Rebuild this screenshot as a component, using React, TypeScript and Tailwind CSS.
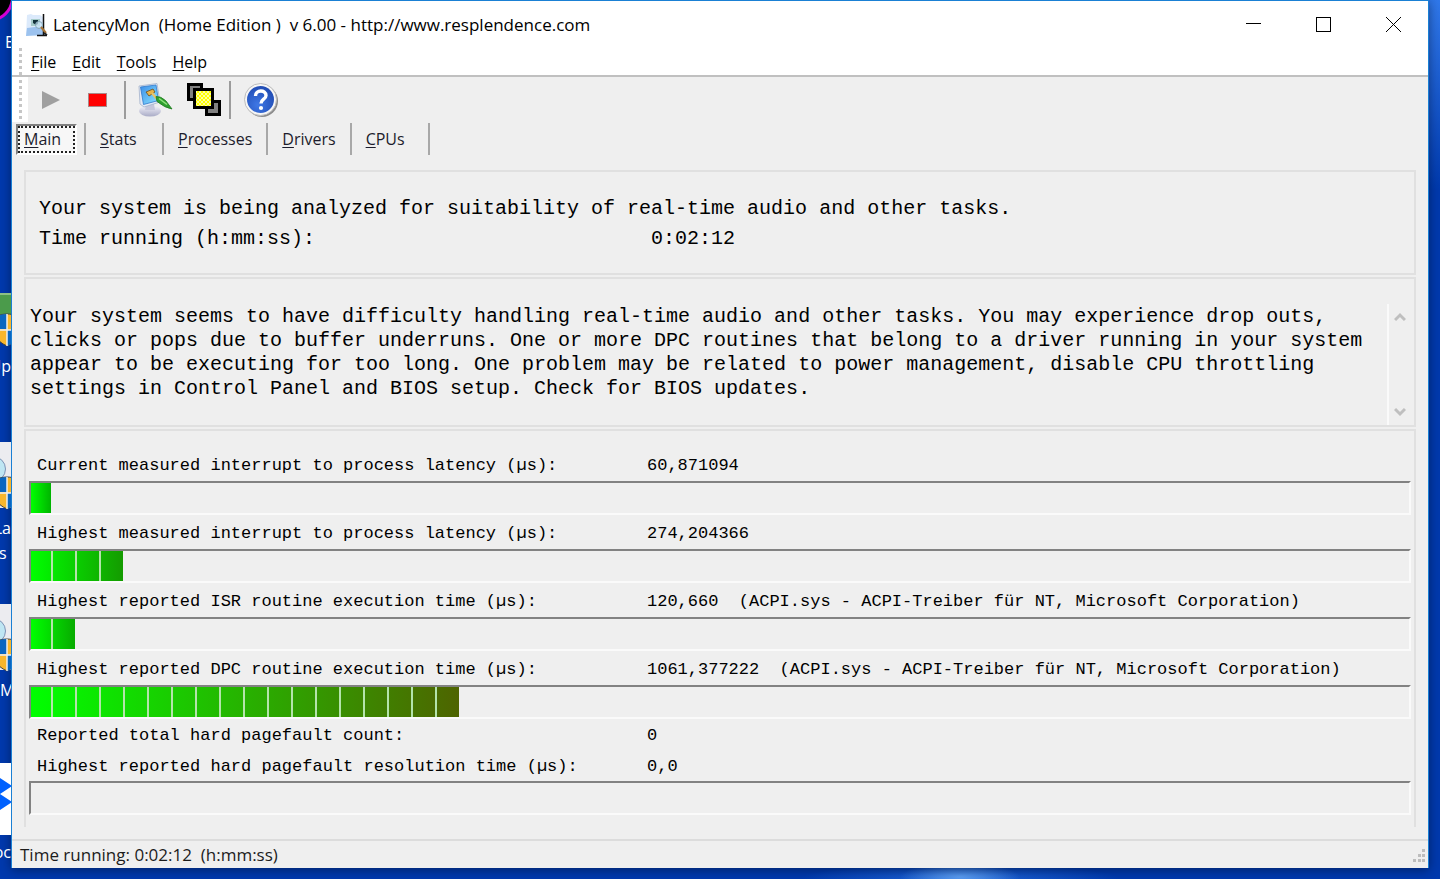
import React from "react";

const MONO = "font-['Liberation_Mono','Courier_New',monospace]";
const UI = "font-['Open_Sans','Noto_Sans',sans-serif]";

function Mnemonic({ text }: { text: string }) {
  return (
    <>
      <span className="underline underline-offset-2">{text[0]}</span>
      {text.slice(1)}
    </>
  );
}

function AppIcon() {
  return (
    <svg width="22" height="24" viewBox="0 0 22 24" aria-hidden="true">
      <path d="M1 2 L5 1 L7 2 L14 2 L17 4 L17 21 L3 22 L0 23 Z" fill="#dceafb" />
      <path d="M1 15 L17 13 L19 22 L0 23 Z" fill="#9cc2ee" />
      <path d="M17.500 1 V22 M11 22.500 H21" stroke="#111" strokeWidth="1.500" />
      <rect x="5" y="6" width="9" height="7" fill="#a5cbc8" />
      <path d="M7 7 h5 v4 l-2 1 l-3-2z" fill="#12313a" />
      <circle cx="13" cy="12" r="3.500" fill="#cfe8f8" fillOpacity=".7" stroke="#8ab" />
      <path d="M15 14 L20 20" stroke="#a87434" strokeWidth="2" />
      <path d="M18 20 L21 22" stroke="#222" strokeWidth="2" />
    </svg>
  );
}

function MonitorIcon() {
  return (
    <svg width="36" height="36" viewBox="0 0 36 36" aria-hidden="true">
      <defs>
        <linearGradient id="screen" x1="0" y1="0" x2="1" y2="1">
          <stop offset="0" stopColor="#3b8ee8" />
          <stop offset="1" stopColor="#8be4ff" />
        </linearGradient>
        <linearGradient id="base" x1="0" y1="0" x2="0" y2="1">
          <stop offset="0" stopColor="#f4f4fb" />
          <stop offset="1" stopColor="#a9abc6" />
        </linearGradient>
      </defs>
      <ellipse cx="13" cy="29" rx="11" ry="5.500" fill="url(#base)" />
      <path d="M9 22 h8 l1 6 h-10z" fill="#c5c7dc" />
      <path d="M2 4 L20 1.500 L23 20 L7 25 L3 22 Z" fill="#e3e9f5" stroke="#a3b3cc" strokeWidth=".8" />
      <path d="M3.500 5 L19 3 L21.500 18.500 L6.500 22.500 Z" fill="url(#screen)" stroke="#2f78cc" strokeWidth=".8" />
      <path d="M9 10 L16 7 L18 10 L12 14 Z" fill="#e8b44a" stroke="#6b4a18" strokeWidth=".8" />
      <path d="M15 11 L20 17" stroke="#e9c46b" strokeWidth="2.500" />
      <path d="M19 14.500 Q24 14 29 19 L35 27 Q28 26 20 19.500 Z" fill="#2fa02f" stroke="#1d7a1d" strokeWidth=".8" />
      <path d="M22 16.500 L30 22.500" stroke="#8fe37b" strokeWidth="1.500" />
    </svg>
  );
}

function LayersIcon() {
  return (
    <svg width="34" height="34" viewBox="0 0 34 34" aria-hidden="true">
      <defs>
        <pattern id="dither" width="4" height="4" patternUnits="userSpaceOnUse">
          <rect width="4" height="4" fill="#ffff00" />
          <rect width="2" height="2" fill="#ffff9c" />
          <rect x="2" y="2" width="2" height="2" fill="#ffff9c" />
        </pattern>
      </defs>
      <rect x="1.500" y="1.500" width="13" height="15" fill="#808080" stroke="#000" strokeWidth="3" />
      <rect x="19.500" y="18.500" width="13" height="13" fill="#808080" stroke="#000" strokeWidth="3" />
      <rect x="7.500" y="6.500" width="18" height="18" fill="url(#dither)" stroke="#000" strokeWidth="3" />
    </svg>
  );
}

function HelpIcon() {
  return (
    <svg width="36" height="36" viewBox="0 0 36 36" aria-hidden="true">
      <defs>
        <radialGradient id="ball" cx=".4" cy=".7" r=".8">
          <stop offset="0" stopColor="#3f78e6" />
          <stop offset="1" stopColor="#1c46ad" />
        </radialGradient>
      </defs>
      <circle cx="19" cy="19" r="16" fill="#8b8b8b" />
      <circle cx="17.500" cy="17.500" r="16" fill="#f6f6f6" stroke="#bdbdbd" />
      <circle cx="17.500" cy="17.500" r="13.500" fill="url(#ball)" />
      <path d="M12.500 14 C12.500 7.500 23 7.500 23 13.500 C23 17.500 18 17 18 21.500" fill="none" stroke="#fff" strokeWidth="3.400" />
      <circle cx="18" cy="26" r="2.100" fill="#fff" />
    </svg>
  );
}

function Gripper({ dots }: { dots: number }) {
  return (
    <div className="flex w-4 flex-col items-center justify-center gap-[3px] bg-white" aria-hidden="true">
      {Array.from({ length: dots }, (_, i) => (
        <span key={i} className="size-[3px] bg-[#c6c6c6]" />
      ))}
    </div>
  );
}

function Separator() {
  return <span className="h-[38px] w-[2px] shrink-0 bg-[#9c9c9c]" aria-hidden="true" />;
}

const tabs = ["Stats", "Processes", "Drivers", "CPUs"];

interface MeterProps {
  label: string;
  segments: number;
  end?: string;
}

function Meter({ label, segments, end = "#00ff00" }: MeterProps) {
  return (
    <div
      role="progressbar"
      aria-label={label}
      aria-valuemin={0}
      aria-valuemax={57}
      aria-valuenow={segments}
      className="flex h-[34px] border-2 border-t-[#828282] border-r-[#fafafa] border-b-[#fafafa] border-l-[#828282]"
    >
      <div className="flex h-[30px]" style={{ backgroundImage: `linear-gradient(to right, #00ff00, ${end})` }}>
        {Array.from({ length: segments }, (_, i) => (
          <span
            key={i}
            className={
              (i === 0 ? "w-[20px]" : "w-[22px]") +
              " box-content " +
              (i < segments - 1 ? "border-r-2 border-[#b4e4aa]" : "")
            }
          />
        ))}
      </div>
    </div>
  );
}

const readings = [
  { label: "Current measured interrupt to process latency (µs):", value: "60,871094", segments: 1, end: "#00b400" },
  { label: "Highest measured interrupt to process latency (µs):", value: "274,204366", segments: 4, end: "#149b00" },
  {
    label: "Highest reported ISR routine execution time (µs):",
    value: "120,660  (ACPI.sys - ACPI-Treiber für NT, Microsoft Corporation)",
    segments: 2,
    end: "#08ab00",
  },
  {
    label: "Highest reported DPC routine execution time (µs):",
    value: "1061,377222  (ACPI.sys - ACPI-Treiber für NT, Microsoft Corporation)",
    segments: 18,
    end: "#4e6400",
  },
];

function Reading({ label, value, tall }: { label: string; value: string; tall?: boolean }) {
  return (
    <div
      className={"grid grid-cols-[610px_1fr] items-center pt-[3px] pl-2 whitespace-pre " + (tall ? "h-[34px]" : "h-[31px]")}
    >
      <span>{label}</span>
      <span>{value}</span>
    </div>
  );
}

function Shield() {
  return (
    <svg width="34" height="34" viewBox="0 0 34 34" aria-hidden="true">
      <path d="M17 1 C24 1 30 4 33 5 C33 20 28 28 17 33 C6 28 1 20 1 5 C4 4 10 1 17 1Z" fill="#f8b62d" stroke="#444" />
      <path d="M17 1 C10 1 4 4 1 5 C1 10 1 13 2 16 H17Z" fill="#0a66c0" />
      <path d="M17 17 H32 C30 25 25 30 17 33Z" fill="#0a66c0" />
      <path d="M17 1 V33 M1 17 H33" stroke="#eee" strokeWidth="1.500" />
    </svg>
  );
}

function DesktopStrip() {
  return (
    <div className={"relative w-[11px] shrink-0 overflow-hidden text-[16px] leading-5 text-white " + UI}>
      <div className="absolute top-[-28px] left-[-36px] size-[50px] rounded-full border-3 border-[#d400d4] bg-black" />
      <span className="absolute top-8 left-[5px]">B</span>
      <div className="absolute top-[293px] left-0 h-7 w-3 border-t-2 border-[#8cc084] bg-[#4b9b4b]" />
      <div className="absolute top-[313px] left-[-10px]"><Shield /></div>
      <span className="absolute top-[356px] right-0">Up</span>
      <div className="absolute top-[442px] left-0 h-[66px] w-3 bg-[#ececf0]" />
      <div className="absolute top-[456px] left-[-20px] size-[26px] rounded-full border border-[#7e92b5] bg-[#bfe6f3]" />
      <div className="absolute top-[476px] left-[-10px]"><Shield /></div>
      <span className="absolute top-[518px] right-0">La</span>
      <span className="absolute top-[543px] left-[-1px]">s</span>
      <div className="absolute top-[604px] left-0 h-[66px] w-3 bg-[#ececf0]" />
      <div className="absolute top-[618px] left-[-20px] size-[26px] rounded-full border border-[#7e92b5] bg-[#bfe6f3]" />
      <div className="absolute top-[638px] left-[-10px]"><Shield /></div>
      <span className="absolute top-[680px] left-0">M</span>
      <div className="absolute top-[763px] left-0 h-[72px] w-3 bg-white">
        <svg width="12" height="72" viewBox="0 0 12 72" aria-hidden="true">
          <path d="M0 15 L12 23 L0 31Z M0 31 L12 39 L0 47Z" fill="#0061fe" />
        </svg>
      </div>
      <span className="absolute top-[842px] right-0">oc</span>
    </div>
  );
}

export default function App() {
  return (
    <div className="flex min-h-screen bg-[radial-gradient(ellipse_60px_14px_at_960px_877px,#5a9cf0,transparent),radial-gradient(ellipse_160px_16px_at_960px_879px,#1f66d8,transparent),radial-gradient(ellipse_160px_190px_at_1440px_0px,#3078ea,transparent)] bg-[#0039ad]">
      <DesktopStrip />
      <div className="mr-[11px] mb-[11px] flex min-w-0 flex-1 flex-col border border-b-0 border-[#1a80d4] bg-[#efefef] text-black shadow-[0_2px_10px_rgba(0,0,0,0.4)]">
        <header className={"flex h-[47px] items-center bg-white pl-[14px] " + UI}>
          <AppIcon />
          <h1 className="ml-[5px] flex-1 text-[17px] leading-6 whitespace-pre">
            {"LatencyMon  (Home Edition )  v 6.00 - http://www.resplendence.com"}
          </h1>
          <button aria-label="Minimize" className="flex h-[47px] w-[70px] items-center justify-center">
            <svg width="15" height="15" viewBox="0 0 15 15"><path d="M0 6.500 H15" stroke="#000" /></svg>
          </button>
          <button aria-label="Maximize" className="flex h-[47px] w-[70px] items-center justify-center">
            <svg width="15" height="15" viewBox="0 0 15 15"><rect x=".5" y=".5" width="14" height="14" fill="none" stroke="#000" /></svg>
          </button>
          <button aria-label="Close" className="flex h-[47px] w-[70px] items-center justify-center">
            <svg width="15" height="15" viewBox="0 0 15 15"><path d="M0 0 L15 15 M15 0 L0 15" stroke="#000" /></svg>
          </button>
        </header>

        <nav className={"flex h-[29px] border-b-2 border-[#c0c0c0] bg-white text-[16px] " + UI}>
          <Gripper dots={5} />
          <div className="flex items-center gap-4 pl-[3px]">
            {["File", "Edit", "Tools", "Help"].map((m) => (
              <button key={m}><Mnemonic text={m} /></button>
            ))}
          </div>
        </nav>

        <div className="flex h-[45px] items-stretch">
          <Gripper dots={7} />
          <div className="flex items-center">
            <button aria-label="Start" className="flex w-[46px] justify-center">
              <svg width="18" height="18" viewBox="0 0 18 18"><path d="M0 0 L18 9 L0 18Z" fill="#a0a0a0" /></svg>
            </button>
            <button aria-label="Stop" className="flex w-[50px] pl-[14px]">
              <svg width="19" height="14" viewBox="0 0 19 14"><rect x=".5" y=".5" width="18" height="13" fill="#f00" stroke="#a88" /></svg>
            </button>
            <Separator />
            <button aria-label="Options" className="flex w-[58px] justify-center"><MonitorIcon /></button>
            <button aria-label="Windows" className="flex w-[45px] pl-[3px]"><LayersIcon /></button>
            <Separator />
            <button aria-label="Help" className="flex w-[60px] justify-center"><HelpIcon /></button>
          </div>
        </div>

        <div role="tablist" className={"flex h-[34px] items-center pl-1 text-[16px] leading-5 text-[#1c1c2c] " + UI}>
          <button
            role="tab"
            aria-selected="true"
            className="h-[31px] w-[61px] border-2 border-t-[#808080] border-r-white border-b-white border-l-[#808080] bg-[#f7f7f7]"
          >
            <span className="flex h-full items-center border-2 border-dotted border-[#222] pl-1">
              <span><Mnemonic text="Main" /></span>
            </span>
          </button>
          <span className="ml-[7px] h-8 w-[2px] bg-[#a8a8a8]" aria-hidden="true" />
          {tabs.map((t) => (
            <button
              key={t}
              role="tab"
              aria-selected="false"
              className="h-8 min-w-[78px] border-r-2 border-[#a8a8a8] px-[14px] text-left"
            >
              <Mnemonic text={t} />
            </button>
          ))}
        </div>

        <main className={"mx-3 mt-[14px] flex flex-1 flex-col gap-[2px] " + MONO}>
          <section className="border-2 border-[#e0e0e0] pt-[22px] pb-[19px] pl-[13px] text-[20px] leading-[30px]">
            <p>Your system is being analyzed for suitability of real-time audio and other tasks.</p>
            <p className="grid grid-cols-[612px_1fr]">
              <span>Time running (h:mm:ss):</span>
              <span>0:02:12</span>
            </p>
          </section>

          <section className="flex border-2 border-[#e0e0e0] pt-[25px]">
            <textarea
              readOnly
              rows={5}
              aria-label="Analysis result"
              className="block flex-1 resize-none overflow-hidden bg-transparent pt-px pl-1 text-[20px] leading-6 outline-none"
              defaultValue="Your system seems to have difficulty handling real-time audio and other tasks. You may experience drop outs, clicks or pops due to buffer underruns. One or more DPC routines that belong to a driver running in your system appear to be executing for too long. One problem may be related to power management, disable CPU throttling settings in Control Panel and BIOS setup. Check for BIOS updates."
            />
            <div className="flex w-[27px] flex-col items-center justify-between border-l-2 border-[#fafafa] py-2 pr-[3px]">
              <button aria-label="Scroll up">
                <svg width="12" height="10" viewBox="0 0 12 10"><path d="M1 8 L6 3 L11 8" fill="none" stroke="#bfbfbf" strokeWidth="3" /></svg>
              </button>
              <button aria-label="Scroll down">
                <svg width="12" height="10" viewBox="0 0 12 10"><path d="M1 2 L6 7 L11 2" fill="none" stroke="#bfbfbf" strokeWidth="3" /></svg>
              </button>
            </div>
          </section>

          <section className="border-2 border-b-0 border-[#e0e0e0] px-[3px] pt-4 pb-3 text-[17px] leading-6">
            {readings.map((r) => (
              <div key={r.label}>
                <Reading label={r.label} value={r.value} tall />
                <Meter label={r.label} segments={r.segments} end={r.end} />
              </div>
            ))}
            <Reading label="Reported total hard pagefault count:" value="0" />
            <Reading label="Highest reported hard pagefault resolution time (µs):" value="0,0" />
            <Meter label="Highest reported hard pagefault resolution time" segments={0} />
          </section>
        </main>

        <footer className={"flex h-[29px] items-center justify-between border-t-2 border-[#dcdcdc] pt-px pl-2 text-[17px] leading-6 text-[#1c1c1c] " + UI}>
          <span className="whitespace-pre">{"Time running: 0:02:12  (h:mm:ss)"}</span>
          <svg width="16" height="16" viewBox="0 0 16 16" aria-hidden="true">
            <path d="M10 2h3v3h-3z M6 7h3v3h-3z M10 7h3v3h-3z M1 12h3v3h-3z M6 12h3v3h-3z M10 12h3v3h-3z" fill="#bdbdbd" />
          </svg>
        </footer>
      </div>
    </div>
  );
}
